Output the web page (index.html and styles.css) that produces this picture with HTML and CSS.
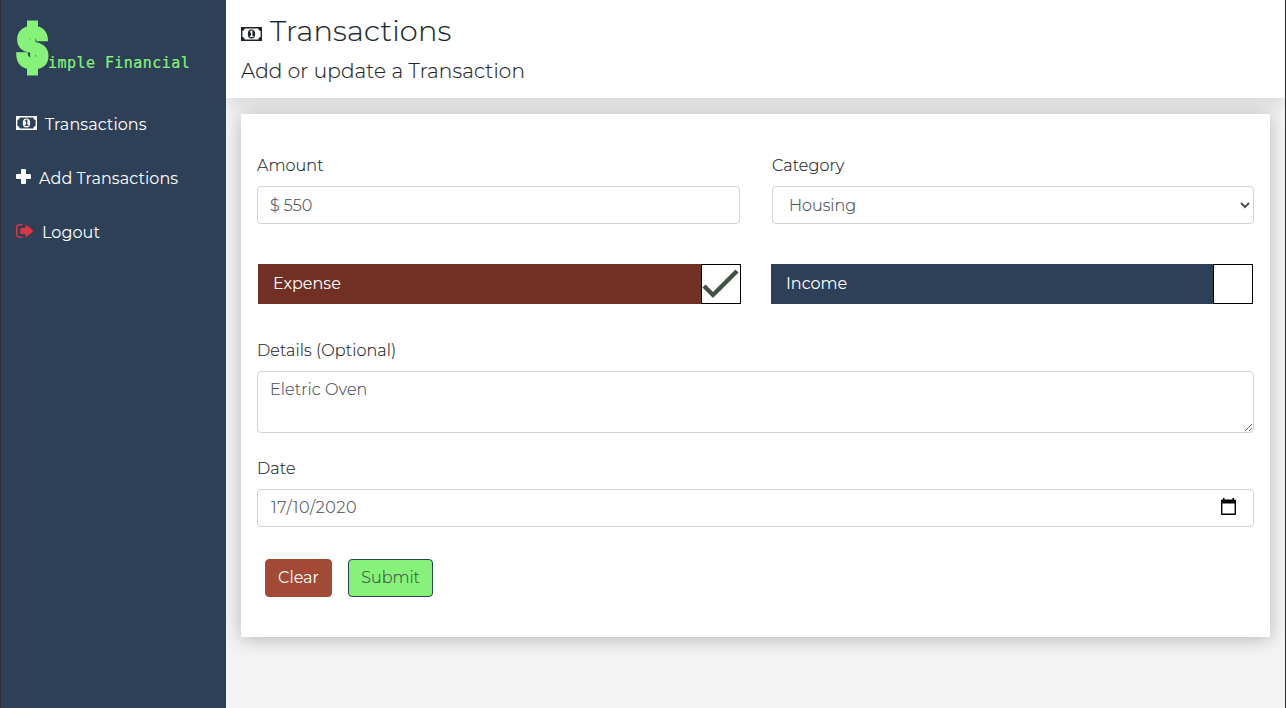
FILE: index.html
```html
<!DOCTYPE html>
<html lang="en">
<head>
<meta charset="utf-8">
<title>Simple Financial</title>
<link rel="stylesheet" href="styles.css">
</head>
<body>
<svg class="defs" width="0" height="0">
  <symbol id="money" viewBox="0 0 21 14">
    <path fill="currentColor" fill-rule="evenodd" d="M0 0H21V14H0ZM3.8 1.5A2.8 2.8 0 0 1 1.4 4V10A2.8 2.8 0 0 1 3.8 12.5H17.2A2.8 2.8 0 0 1 19.6 10V4A2.8 2.8 0 0 1 17.2 1.5Z"/>
    <ellipse cx="10.5" cy="7" rx="3.7" ry="4.5" fill="currentColor"/>
    <path fill="none" stroke="var(--cut)" stroke-width="1.3" d="M9 5.2L10.7 4.2V9.3M8.8 9.3H12.4"/>
  </symbol>
</svg>
<div class="app">
  <aside class="sidebar">
    <div class="logo"><span class="logo-s">$</span><span class="logo-text">imple Financial</span></div>
    <nav class="nav">
      <a class="nav-link"><svg class="money" width="21" height="14"><use href="#money"/></svg><span>Transactions</span></a>
      <a class="nav-link"><svg class="plus" width="15" height="15" viewBox="0 0 15 15"><path fill="#fff" d="M6 0H9Q10 0 10 1V5H14Q15 5 15 6V9Q15 10 14 10H10V14Q10 15 9 15H6Q5 15 5 14V10H1Q0 10 0 9V6Q0 5 1 5H5V1Q5 0 6 0Z"/></svg><span>Add Transactions</span></a>
      <a class="nav-link"><svg width="18" height="14" viewBox="0 0 18 14"><path fill="none" stroke="#dc3545" stroke-width="1.5" d="M6.5 .8H3.2A2.4 2.4 0 0 0 .8 3.2V10.8A2.4 2.4 0 0 0 3.2 13.2H6.5"/><path fill="#dc3545" d="M5 4H9.5V1.3Q9.5 .2 10.5 1L17 6.5Q17.6 7 17 7.5L10.5 13Q9.5 13.8 9.5 12.7V10H5Q4.3 10 4.3 9.3V4.7Q4.3 4 5 4Z"/></svg><span>Logout</span></a>
    </nav>
  </aside>
  <main class="main">
    <header class="head">
      <h1 class="title"><svg class="money" width="21" height="14"><use href="#money"/></svg><span>Transactions</span></h1>
      <p class="subtitle">Add or update a Transaction</p>
    </header>
    <form class="card">
      <div class="row">
        <label class="field"><span class="label">Amount</span><input class="control" type="text" value="$ 550"></label>
        <label class="field"><span class="label">Category</span><select class="control"><option>Housing</option></select></label>
      </div>
      <div class="row types">
        <div class="type expense"><span class="type-name">Expense</span><span class="box"><svg width="38" height="38" viewBox="0 0 38 38"><path fill="none" stroke="#3f5245" stroke-width="4.4" d="M2 21L11 30L35 6"/></svg></span></div>
        <div class="type income"><span class="type-name">Income</span><span class="box"></span></div>
      </div>
      <label class="field details"><span class="label">Details (Optional)</span><textarea class="control area">Eletric Oven</textarea></label>
      <label class="field"><span class="label">Date</span><span class="control date"><span class="date-value">17/10/2020</span><svg width="15" height="17" viewBox="0 0 15 17"><path fill="#000" fill-rule="evenodd" d="M2 0H3.6V1.5H11.4V0H13V1.5H14Q15 1.5 15 2.5V16Q15 17 14 17H1Q0 17 0 16V2.5Q0 1.5 1 1.5H2ZM1.4 5.5V15.5H13.6V5.5Z"/></svg></span></label>
      <div class="actions"><button class="btn clear" type="button">Clear</button><button class="btn submit" type="button">Submit</button></div>
    </form>
  </main>
</div>
</body>
</html>
```
FILE: styles.css
```css
* { box-sizing: border-box; }
body { margin: 0; background: #f4f4f4; color: #212529; font: 300 16px/24px Montserrat, Inter, sans-serif; -webkit-text-stroke: .15px; }
.defs { display: block; }
.app { display: flex; height: 708px; overflow: hidden; border-right: 1px solid #2b2b2b; }
.sidebar { width: 226px; flex: none; background: #2e4057; border-left: 1px solid #2b3038; color: #fff; padding-left: 15px; z-index: 2; }
.logo { height: 98px; display: flex; align-items: flex-start; color: #86f279; }
.logo-s { position: relative; width: 32px; height: 96px; font: 900 49px/95px Inter, sans-serif; -webkit-text-stroke: 2.4px #86f279; transform: scaleY(1.1); }
/* square ends of the dollar bar */
.logo-s::before, .logo-s::after { content: ""; position: absolute; left: 11px; width: 11px; height: 8px; background: #86f279; }
.logo-s::before { top: 22.5px; }
.logo-s::after { top: 63px; height: 10px; }
.logo-text { font: 400 15px/20px "DejaVu Sans Mono", monospace; letter-spacing: .45px; padding-top: 53px; -webkit-text-stroke: .2px #86f279; }
.nav { padding-top: 15px; }
.nav-link { display: flex; align-items: center; gap: 8px; height: 24px; margin-bottom: 30px; font-weight: 400; letter-spacing: .07px; -webkit-text-stroke: 0; }
.nav-link svg { margin-bottom: 4px; }
.nav-link .plus { margin-bottom: 5px; }
.money { flex: none; --cut: #2e4057; }
.main { flex: 1; min-width: 0; }
.head { height: 98px; background: #fff; padding: 14px 15px 0; box-shadow: 0 8px 16px rgba(0,0,0,.1); }
.title { display: flex; align-items: center; gap: 8px; margin: 0; height: 34px; font-size: 28.8px; line-height: 34px; font-weight: 300; letter-spacing: .22px; }
.title .money { --cut: #fff; margin-top: 6px; }
.subtitle { margin: 11px 0 0; font-size: 20px; line-height: 24px; letter-spacing: .16px; }
.card { position: relative; background: #fff; margin: 16px 15px 0; height: 523px; padding: 40px 16px 0; box-shadow: 0 2px 18px rgba(0,0,0,.26); }
.row { display: grid; grid-template-columns: 483px 482px; gap: 32px; }
.field { display: block; }
.label { display: block; height: 24px; margin-bottom: 8px; letter-spacing: .1px; }
.control { display: block; width: 100%; height: 38px; border: 1px solid #ced4da; border-radius: 4px; padding: 6px 12px; font: inherit; color: #495057; background: #fff; outline: none; margin: 0; }
.types { margin: 40px 0 35px 1px; grid-template-columns: 483px 482px; gap: 30px; }
.type { height: 40px; display: flex; color: #fff; font-weight: 400; -webkit-text-stroke: 0; }
.type-name { flex: 1; padding: 8px 15px; }
.expense { background: #723024; }
.income { background: #2e4057; }
.box { width: 40px; height: 40px; background: #fff; border: 1px solid #000; }
.box svg { display: block; }
.area { height: 62px; resize: vertical; letter-spacing: .12px; }
.details { margin-bottom: 24px; }
.date { display: flex; justify-content: space-between; align-items: center; padding-right: 17px; }
.date svg { margin-bottom: 3px; }
.date-value { letter-spacing: .65px; padding-left: 1px; }
.actions { display: flex; gap: 16px; padding: 32px 8px 0; }
.btn { height: 38px; border-radius: 4px; font: inherit; padding: 0; border: 1px solid #a24a36; }
.clear { width: 67px; background: #a24a36; color: #fff; font-weight: 400; -webkit-text-stroke: 0; }
.submit { width: 85px; background: #86f279; border-color: #2e4057; color: #3f5245; }
```
